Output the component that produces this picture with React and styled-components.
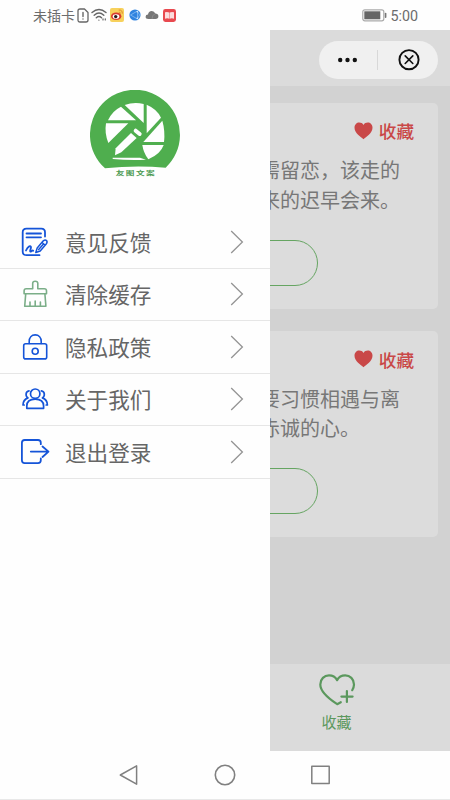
import styled, { createGlobalStyle } from 'styled-components';

const GlobalStyle = createGlobalStyle`
	body {
		margin: 0;
		background: #fefefe;
		font-family: 'Noto Sans CJK SC', 'Noto Sans', sans-serif;
	}

	svg {
		display: block;
		flex: none;
	}
`;

const Phone = styled.div`
	width: 450px;
	height: 800px;
	display: flex;
	flex-direction: column;
	overflow: hidden;
	background: #fefefe;
`;

const StatusBar = styled.header`
	height: 30px;
	flex: none;
	box-sizing: border-box;
	padding: 0 32px 0 33px;
	display: flex;
	align-items: center;
	justify-content: space-between;
	color: #6c6c6c;
`;

const StatusGroup = styled.div`
	display: flex;
	align-items: center;
	gap: ${({ $gap }) => $gap}px;
`;

const Carrier = styled.span`
	font-size: 14px;
	line-height: 20px;
	margin: -1px -1px 0 0;
`;

const Clock = styled.span`
	font-family: Roboto, sans-serif;
	font-size: 14.3px;
	line-height: 20px;
	margin-top: 1px;
`;

const Stage = styled.div`
	position: relative;
	height: 721px;
	flex: none;
	display: flex;
	flex-direction: column;
	background: #d2d2d2;
`;

const TopBar = styled.div`
	height: 56px;
	flex: none;
	box-sizing: border-box;
	padding: 11px 12px 0;
	display: flex;
	justify-content: flex-end;
	background: #dbdbdb;
`;

const Capsule = styled.div`
	width: 119px;
	height: 38px;
	border-radius: 19px;
	background: #f0f0f0;
	display: grid;
	grid-template-columns: 57px 3px 59px;
	align-items: center;
	justify-items: center;
`;

const Divider = styled.span`
	width: 1px;
	height: 20px;
	background: #d8d8d8;
`;

const Feed = styled.main`
	flex: 1;
	padding: 16.5px 12px 0;
	display: flex;
	flex-direction: column;
	gap: 22.5px;
`;

const Card = styled.article`
	height: 206px;
	box-sizing: border-box;
	padding: 14px 24px 0 0;
	border-radius: 5px;
	background: #dcdcdc;
	display: flex;
	flex-direction: column;
`;

const Favorite = styled.div`
	height: 28px;
	display: flex;
	align-items: center;
	justify-content: flex-end;
	gap: 6px;
	color: #c94848;
	font-size: 17.6px;
	font-weight: 500;
`;

const Quote = styled.p`
	margin: 10.5px 0 0 248px;
	font-size: 20px;
	line-height: 29.6px;
	white-space: pre;
	color: #777;
`;

const Pill = styled.div`
	box-sizing: border-box;
	width: 180px;
	height: 46px;
	margin: 25.5px 0 0 126px;
	border: 1.4px solid #66a562;
	border-radius: 23px;
`;

const TabBar = styled.footer`
	height: 87px;
	flex: none;
	box-sizing: border-box;
	padding: 9px 0 0 224px;
	background: #dbdbdb;
`;

const Tab = styled.div`
	width: 225px;
	display: flex;
	flex-direction: column;
	align-items: center;
	color: #5b985d;
	font-size: 15px;
	line-height: 22px;
	gap: 5px;
`;

const Drawer = styled.aside`
	position: absolute;
	top: 0;
	left: 0;
	width: 270px;
	height: 100%;
	background: #fefefe;
`;

const LogoBox = styled.div`
	height: 186px;
	box-sizing: border-box;
	padding: 60px 90px 0;
`;

const Menu = styled.ul`
	margin: 0;
	padding: 0;
	list-style: none;
`;

const MenuItem = styled.li`
	height: 52.5px;
	box-sizing: border-box;
	border-bottom: 1.5px solid #e6e6e6;
	padding: 0 26px 0 20px;
	display: flex;
	align-items: center;
	color: #666;
`;

const Label = styled.span`
	flex: 1;
	margin: 0 0 0 15px;
	font-size: 21.6px;
	line-height: 30px;
`;

const NavBar = styled.nav`
	flex: 1;
	box-sizing: border-box;
	border-bottom: 1px solid #e8e8e8;
	padding: 0 119px 0 118px;
	display: flex;
	align-items: center;
	justify-content: space-between;
`;

const line = {
	fill: 'none',
	strokeLinecap: 'round',
	strokeLinejoin: 'round',
};

const Logo = () => (
	<svg width="90" height="90" viewBox="30 30 270 270">
		<path
			d="M75 265A135 135 0 1 1 257 263Q165 255 75 265Z"
			fill="#4fae4e"
		/>
		<g fill="#fefefe">
			<path d="M84 121Q96 93 123 80L168 121Z" />
			<path d="M134 75Q162 65 191 72V129Z" />
			<path d="M200 74Q231 87 243 113L200 160Z" />
			<path d="M247 122Q256 154 252 186H190Z" />
			<path d="M251 195Q242 222 205 238Q190 218 187 195Z" />
			<path d="M78 130H145L85 189Q73 160 78 130Z" />
			<path d="M105 226L107 205L153 159L170 174L124 217Z" />
			<path
				d="M167 152L179 162"
				stroke="#fefefe"
				strokeWidth="12"
				strokeLinecap="round"
			/>
			<path d="M98 233H180L198 239Q145 241 98 237Z" />
		</g>
		<text
			x="107"
			y="458"
			fontSize="26"
			fontWeight="700"
			fill="#4d9b53"
			textLength="117"
			transform="scale(1 .625)"
			fontFamily="'Noto Sans CJK SC', sans-serif"
		>
			友图文案
		</text>
	</svg>
);

const FeedbackIcon = () => (
	<svg width="30" height="30" viewBox="0 0 30 30" {...line} stroke="#1554d8" strokeWidth="1.8">
		<path d="M19.5 28.2H6.5Q2.7 28.2 2.7 24.5V5.3Q2.7 1.7 6.5 1.7H21.3Q25 1.7 25 5.3V9.5" />
		<path d="M6.5 6.5H21M6.5 10.3H21" />
		<path d="M6 23.5C8 19 11 18 11 20.5C11 22 9 25 11 24.6C12 24.4 12.2 23 13.2 23.7" />
		<path
			d="M15.8 25.5L17.2 21L23.3 13.8Q25.2 12.3 26.5 13.6Q27.8 15 26.2 17L20.2 24ZM22 15.5L25 18M18.7 22.4L23.5 17"
			strokeWidth="1.5"
		/>
	</svg>
);

const BrushIcon = () => (
	<svg width="30" height="30" viewBox="0 0 30 30" {...line} stroke="#7bae88" strokeWidth="1.6">
		<path d="M12.7 9.7V4.3Q12.7 2.2 15.2 2.2Q17.8 2.2 17.8 4.3V9.7H24.3Q26.5 9.7 26.5 11.8V14.8H4.1V11.8Q4.1 9.7 6.3 9.7Z" />
		<path d="M5.7 15L4.7 27.3H25.9L24.9 15M10 27V23M15.2 27V22M20.4 27V23" />
	</svg>
);

const LockIcon = () => (
	<svg width="30" height="30" viewBox="0 0 30 30" {...line} stroke="#1554d8" strokeWidth="1.6">
		<rect x="3.7" y="11.7" width="23" height="15.2" rx="2" />
		<path d="M9.2 11.5V9.4C9.2 5.7 11.5 2.9 15.2 2.9S21.2 5.7 21.2 9.4V11.5" />
		<circle cx="15.2" cy="19.2" r="3" />
	</svg>
);

const PeopleIcon = () => (
	<svg width="30" height="30" viewBox="0 0 30 30" {...line} stroke="#1554d8" strokeWidth="1.7">
		<circle cx="15.2" cy="9.7" r="4.7" />
		<path d="M6.8 24.3V22C6.8 17.7 10 15.1 15.2 15.1S23.6 17.7 23.6 22V24.3Z" />
		<path d="M9 6.8C5.5 7.2 5.1 12.2 8 13.9C4.8 15.2 3 17.7 3 21H4.2" />
		<path d="M21.4 6.8C24.9 7.2 25.3 12.2 22.4 13.9C25.6 15.2 27.4 17.7 27.4 21H26.2" />
	</svg>
);

const LogoutIcon = () => (
	<svg width="30" height="30" viewBox="0 0 30 30" {...line} stroke="#1554d8" strokeWidth="1.8">
		<path d="M20.8 7.2V5.8Q20.8 3 18 3H4.7Q1.9 3 1.9 5.8V23.3Q1.9 26.1 4.7 26.1H18Q20.8 26.1 20.8 23.3V21.5" />
		<path d="M10.8 14.6H28.3M22.5 9.5L28.5 14.6L22.5 20" />
	</svg>
);

const Arrow = () => (
	<svg width="14" height="24" viewBox="0 0 14 24" fill="none" stroke="#949494" strokeWidth="1.3">
		<path d="M1.2 1L12.4 12L1.2 23" />
	</svg>
);

const Heart = () => (
	<svg width="19" height="18" viewBox="0 0 19 18" fill="#c94848">
		<path d="M9.5 17.2C7 15.3.5 11 .5 5.8C.5 2.6 2.7.6 5.2.6C7 .6 8.6 1.4 9.5 2.9C10.4 1.4 12 .6 13.8.6C16.3.6 18.5 2.6 18.5 5.8C18.5 11 12 15.3 9.5 17.2Z" />
	</svg>
);

const HeartPlus = () => (
	<svg width="38" height="33" viewBox="0 0 38 33" {...line} stroke="#5b985d" strokeWidth="2.2">
		<path d="M22.8 29.2L19.2 31.2C14 27.7 2.3 20.3 2.3 11.5C2.3 6 6.3 2.4 11 2.4C14.7 2.4 17.4 4 19.1 7.2C20.8 4 23.5 2.4 27.2 2.4C31.9 2.4 36 6 36 11.5C36 13.6 35.2 15.5 34.2 17.2" />
		<path d="M28.9 18V29M23.4 23.6H34.6" />
	</svg>
);

const StatusIcons = () => (
	<>
		<svg width="12" height="15" viewBox="0 0 12 15" {...line} stroke="#666" strokeWidth="1.3">
			<path d="M1 3Q1 1 3 1H7.5L11 4.5V12Q11 14 9 14H3Q1 14 1 12Z" />
			<path d="M6 4.5V8.5M6 10.9V11" strokeWidth="1.4" />
		</svg>
		<svg width="16" height="14" viewBox="0 0 16 14" {...line} stroke="#666" strokeWidth="1.4">
			<path d="M1 4.5Q8-1.5 15 4.5M3.2 7.2Q8 3 12.8 7.2M5.3 9.7Q8 7.4 10.5 9.7" />
			<path d="M7.9 12.1V12.2M12 10.8V12M14.3 10.8V12" strokeWidth="1.2" />
		</svg>
		<svg width="14" height="14" viewBox="0 0 14 14">
			<rect width="14" height="14" rx="2" fill="#f7d15c" />
			<ellipse cx="6.2" cy="8.2" rx="5.2" ry="3.8" fill="#d93b31" />
			<ellipse cx="6" cy="8.5" rx="3.3" ry="2.3" fill="#fff" />
			<circle cx="5.7" cy="8.6" r="1.7" fill="#241b18" />
			<path d="M8.7 2.1Q12.5 1.6 12.3 5.7M8.8 4.1Q10.5 3.9 10.4 5.6" fill="none" stroke="#e58c2d" />
		</svg>
	</>
);

const AppIcons = () => (
	<>
		<svg width="12" height="12" viewBox="0 0 12 12">
			<circle cx="6" cy="6" r="5.6" fill="#2f83df" />
			<path d="M1.5 6L8.5 2V10ZM8.5 2L10.5 6L8.5 10" fill="none" stroke="#a9d2fa" strokeWidth=".6" />
			<circle cx="8.3" cy="2.8" r=".8" fill="#d9edff" />
			<circle cx="8.3" cy="9.2" r=".8" fill="#d9edff" />
		</svg>
		<svg width="14" height="10" viewBox="0 0 14 10">
			<path d="M3.4 9Q.6 9 .6 6.8Q.6 4.7 3 4.6Q3.5 1 6.8 1Q9.5 1 10.2 3.6Q13.4 3.7 13.4 6.3Q13.4 9 10.5 9Z" fill="#777" />
			<path d="M7 9Q7 4.5 10.3 3.8" stroke="#8c8c8c" fill="none" />
		</svg>
		<svg width="13" height="13" viewBox="0 0 13 13">
			<rect width="13" height="13" rx="2.4" fill="#e8494f" />
			<path d="M2 3.2Q4.5 2.5 6.3 3.5V9.8Q4.5 9 2 9.7ZM11 3.2Q8.5 2.5 6.7 3.5V9.8Q8.5 9 11 9.7Z" fill="#fbdcdd" />
		</svg>
	</>
);

const Battery = () => (
	<svg width="25" height="13" viewBox="0 0 25 13">
		<rect x=".8" y=".8" width="21" height="11" rx="2" fill="#fff" stroke="#aaa" strokeWidth="1.2" />
		<rect x="2.3" y="2.3" width="16" height="8" fill="#666" />
		<rect x="22.8" y="3.7" width="1.6" height="5.4" rx=".8" fill="#777" />
	</svg>
);

const menu = [
	{ label: '意见反馈', Icon: FeedbackIcon },
	{ label: '清除缓存', Icon: BrushIcon },
	{ label: '隐私政策', Icon: LockIcon },
	{ label: '关于我们', Icon: PeopleIcon },
	{ label: '退出登录', Icon: LogoutIcon },
];

const quotes = ['需留恋，该走的\n来的迟早会来。', '要习惯相遇与离\n赤诚的心。'];

const App = () => (
	<>
		<GlobalStyle />
		<Phone>
			<StatusBar>
				<StatusGroup $gap={5}>
					<StatusGroup $gap={2.5}>
						<Carrier>未插卡</Carrier>
						<StatusIcons />
					</StatusGroup>
					<StatusGroup $gap={4}>
						<AppIcons />
					</StatusGroup>
				</StatusGroup>
				<StatusGroup $gap={3}>
					<Battery />
					<Clock>5:00</Clock>
				</StatusGroup>
			</StatusBar>

			<Stage>
				<TopBar>
					<Capsule>
						<svg width="20" height="6" viewBox="0 0 20 6" fill="#111">
							<circle cx="2.2" cy="3" r="2.2" />
							<circle cx="9.5" cy="3" r="2.2" />
							<circle cx="16.8" cy="3" r="2.2" />
						</svg>
						<Divider />
						<svg width="22" height="22" viewBox="0 0 22 22" {...line} stroke="#111">
							<circle cx="11" cy="10.7" r="9.6" strokeWidth="1.9" />
							<path d="M7.2 6.9L14.8 14.5M14.8 6.9L7.2 14.5" strokeWidth="1.6" />
						</svg>
					</Capsule>
				</TopBar>

				<Feed>
					{quotes.map((quote) => (
						<Card key={quote}>
							<Favorite>
								<Heart />
								收藏
							</Favorite>
							<Quote>{quote}</Quote>
							<Pill />
						</Card>
					))}
				</Feed>

				<TabBar>
					<Tab>
						<HeartPlus />
						收藏
					</Tab>
				</TabBar>

				<Drawer>
					<LogoBox>
						<Logo />
					</LogoBox>
					<Menu>
						{menu.map(({ label, Icon }) => (
							<MenuItem key={label}>
								<Icon />
								<Label>{label}</Label>
								<Arrow />
							</MenuItem>
						))}
					</Menu>
				</Drawer>
			</Stage>

			<NavBar>
				<svg width="20" height="22" viewBox="0 0 20 22" {...line} stroke="#808080" strokeWidth="1.5">
					<path d="M18.6 1.8V20.2L2.3 11Z" />
				</svg>
				<svg width="22" height="22" viewBox="0 0 22 22" {...line} stroke="#808080" strokeWidth="1.6">
					<circle cx="11" cy="11" r="9.7" />
				</svg>
				<svg width="20" height="20" viewBox="0 0 20 20" {...line} stroke="#808080" strokeWidth="1.5">
					<rect x="0.8" y="1.2" width="17.4" height="17.4" />
				</svg>
			</NavBar>
		</Phone>
	</>
);

export default App;
